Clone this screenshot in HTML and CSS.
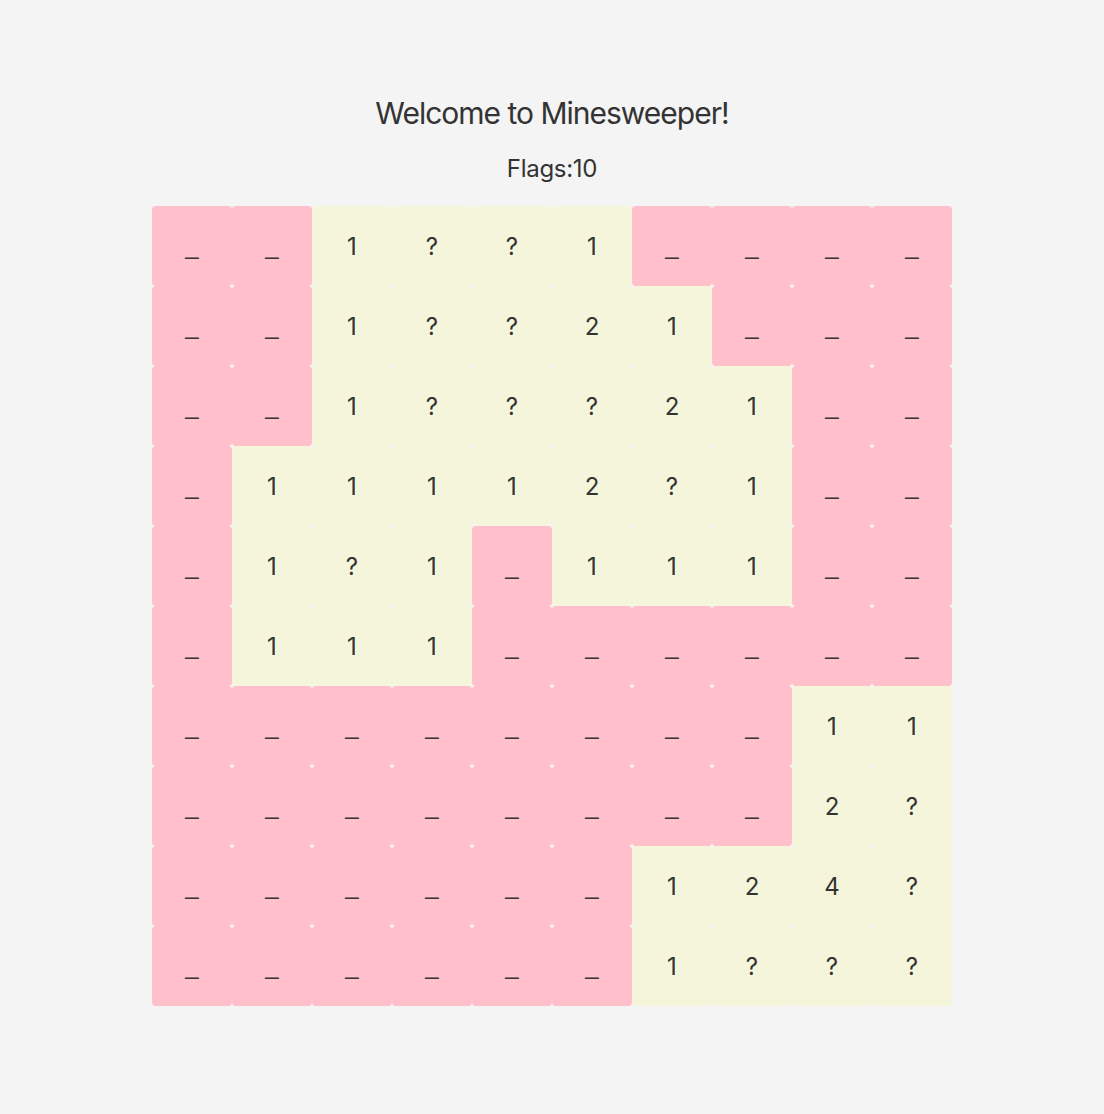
FILE: index.html
```html
<!DOCTYPE html>
<html>
<head>
<meta charset="utf-8">
<link rel="stylesheet" href="styles.css">
</head>
<body>
<main class="app">
  <h1 class="title">Welcome to Minesweeper!</h1>
  <p class="flags">Flags:10</p>
  <div class="board">
    <div class="cell hidden">_</div><div class="cell hidden">_</div><div class="cell open">1</div><div class="cell open">?</div><div class="cell open">?</div><div class="cell open">1</div><div class="cell hidden">_</div><div class="cell hidden">_</div><div class="cell hidden">_</div><div class="cell hidden">_</div>
    <div class="cell hidden">_</div><div class="cell hidden">_</div><div class="cell open">1</div><div class="cell open">?</div><div class="cell open">?</div><div class="cell open">2</div><div class="cell open">1</div><div class="cell hidden">_</div><div class="cell hidden">_</div><div class="cell hidden">_</div>
    <div class="cell hidden">_</div><div class="cell hidden">_</div><div class="cell open">1</div><div class="cell open">?</div><div class="cell open">?</div><div class="cell open">?</div><div class="cell open">2</div><div class="cell open">1</div><div class="cell hidden">_</div><div class="cell hidden">_</div>
    <div class="cell hidden">_</div><div class="cell open">1</div><div class="cell open">1</div><div class="cell open">1</div><div class="cell open">1</div><div class="cell open">2</div><div class="cell open">?</div><div class="cell open">1</div><div class="cell hidden">_</div><div class="cell hidden">_</div>
    <div class="cell hidden">_</div><div class="cell open">1</div><div class="cell open">?</div><div class="cell open">1</div><div class="cell hidden">_</div><div class="cell open">1</div><div class="cell open">1</div><div class="cell open">1</div><div class="cell hidden">_</div><div class="cell hidden">_</div>
    <div class="cell hidden">_</div><div class="cell open">1</div><div class="cell open">1</div><div class="cell open">1</div><div class="cell hidden">_</div><div class="cell hidden">_</div><div class="cell hidden">_</div><div class="cell hidden">_</div><div class="cell hidden">_</div><div class="cell hidden">_</div>
    <div class="cell hidden">_</div><div class="cell hidden">_</div><div class="cell hidden">_</div><div class="cell hidden">_</div><div class="cell hidden">_</div><div class="cell hidden">_</div><div class="cell hidden">_</div><div class="cell hidden">_</div><div class="cell open">1</div><div class="cell open">1</div>
    <div class="cell hidden">_</div><div class="cell hidden">_</div><div class="cell hidden">_</div><div class="cell hidden">_</div><div class="cell hidden">_</div><div class="cell hidden">_</div><div class="cell hidden">_</div><div class="cell hidden">_</div><div class="cell open">2</div><div class="cell open">?</div>
    <div class="cell hidden">_</div><div class="cell hidden">_</div><div class="cell hidden">_</div><div class="cell hidden">_</div><div class="cell hidden">_</div><div class="cell hidden">_</div><div class="cell open">1</div><div class="cell open">2</div><div class="cell open">4</div><div class="cell open">?</div>
    <div class="cell hidden">_</div><div class="cell hidden">_</div><div class="cell hidden">_</div><div class="cell hidden">_</div><div class="cell hidden">_</div><div class="cell hidden">_</div><div class="cell open">1</div><div class="cell open">?</div><div class="cell open">?</div><div class="cell open">?</div>
  </div>
</main>
</body>
</html>
```

FILE: styles.css
```css
html, body {
  margin: 0;
  padding: 0;
  background: #f4f4f4;
}

body {
  font-family: Inter, "Noto Sans", sans-serif;
  color: #333333;
}

.app {
  display: flex;
  flex-direction: column;
  align-items: center;
  padding-top: 95px;
}

.title {
  margin: 0;
  font-size: 30px;
  font-weight: 400;
  line-height: normal;
  letter-spacing: -1px;
}

.flags {
  margin: 23px 0 0 0;
  font-size: 24px;
  line-height: normal;
  letter-spacing: -0.3px;
}

.board {
  margin-top: 23px;
  display: grid;
  grid-template-columns: repeat(10, 80px);
  grid-auto-rows: 80px;
}

.cell {
  display: flex;
  align-items: center;
  justify-content: center;
  font-size: 24px;
  border-radius: 4px;
}

.hidden {
  background: #ffc0cb;
  font-family: "Liberation Sans", Inter, sans-serif;
}

.open {
  background: #f5f5dc;
}
```
